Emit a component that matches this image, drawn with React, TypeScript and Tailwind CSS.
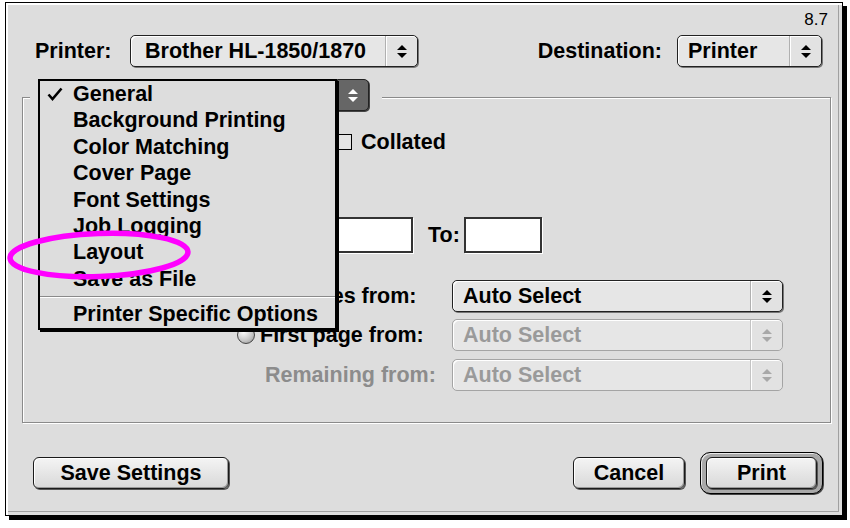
import { type ReactNode } from "react";

const MENU_ITEMS = ["General", "Background Printing", "Color Matching", "Cover Page", "Font Settings", "Job Logging", "Layout", "Save as File"];

export default function App() {
    return (
        <div className="w-[850px] h-[528px] bg-white pt-[2px] pl-[5px] font-['Liberation_Sans',Arial,sans-serif] font-bold text-[21.5px] text-black">
            <div className="relative w-[838px] h-[514px] border border-black bg-[#dddddd] shadow-[4px_4px_0_#000,inset_2px_2px_0_#fff,inset_-3px_-3px_0_#dddddd,inset_-4px_-4px_0_#a0a0a0] flex flex-col">

                <div className="h-[32px] flex justify-end pr-[14px] pt-[8px] text-[17px] leading-[17px] font-normal">
                    8.7
                </div>

                <div className="h-[32px] flex items-center pl-[29px] pr-[20px]">
                    <div className="w-[95px]">Printer:</div>
                    <Popup className="w-[288px]" pad="pl-[14px]">Brother HL-1850/1870</Popup>
                    <div className="flex-1" />
                    <div className="mr-[15px]">Destination:</div>
                    <Popup className="w-[145px]" pad="pl-[10px]">Printer</Popup>
                </div>

                <div className="relative mt-[30px] ml-[16px] w-[809px] h-[326px] border border-[#8a8a8a] shadow-[inset_1px_1px_0_#fff,1px_1px_0_#fff] flex flex-col pt-[28px]">
                    <div className="absolute left-[7px] top-[-19px] pl-[8px] pr-[13px] bg-[#dddddd]">
                        <SectionPopup />
                    </div>

                    {/* copies row: only the Collated box shows beside the open menu */}
                    <div className="h-[32px] flex items-center">
                        <div className="w-[313px]" />
                        <div className="w-[16px] h-[16px] border-[1.5px] border-black bg-[#e4e4e4]" />
                        <div className="ml-[9px]">Collated</div>
                    </div>

                    <div className="mt-[13px] h-[32px]" />

                    <div className="mt-[14px] h-[36px] flex items-center">
                        <div className="w-[314px]" />
                        <TextField className="w-[76px]" />
                        <div className="ml-[15px] mr-[4px]">To:</div>
                        <TextField className="w-[78px]" />
                    </div>

                    <div className="mt-[27px] h-[32px] flex items-center">
                        <div className="w-[214px]" />
                        <Radio checked />
                        <div className="ml-[5px] w-[192px]">All pages from:</div>
                        <Popup className="w-[331px]" pad="pl-[10px]">Auto Select</Popup>
                    </div>

                    <div className="mt-[7px] h-[32px] flex items-center">
                        <div className="w-[214px]" />
                        <Radio />
                        <div className="ml-[5px] w-[192px]">First page from:</div>
                        <Popup className="w-[331px]" pad="pl-[10px]" disabled>Auto Select</Popup>
                    </div>

                    <div className="mt-[8px] h-[32px] flex items-center">
                        <div className="w-[214px]" />
                        <div className="w-[23px]" />
                        <div className="w-[192px] pl-[5px] text-[#8c8c8c]">Remaining from:</div>
                        <Popup className="w-[331px]" pad="pl-[10px]" disabled>Auto Select</Popup>
                    </div>
                </div>

                <div className="mt-[29px] h-[42px] flex items-center pl-[27px] pr-[19px]">
                    <Button className="w-[196px]">Save Settings</Button>
                    <div className="flex-1" />
                    <Button className="w-[112px] mr-[15px]">Cancel</Button>
                    <div className="w-[123px] h-[42px] rounded-[10px] border border-black bg-[#a9a9a9] shadow-[inset_1px_1px_0_#e8e8e8,1px_1px_0_#444] px-[5px] py-[4px]">
                        <Button className="w-full">Print</Button>
                    </div>
                </div>

                <svg className="absolute left-[-6px] top-[-3px] w-[850px] h-[528px] pointer-events-none z-20" viewBox="0 0 850 528">
                    <ellipse cx="99" cy="255" rx="89" ry="21.5" fill="none" stroke="#ff00ff" strokeWidth="5.5" transform="rotate(-2 99 255)" />
                </svg>
            </div>
        </div>
    );
}

function Arrows({ color }: { color: string }) {
    return (
        <svg width="10" height="15" viewBox="0 0 10 15">
            <polygon points="0,6 5,1 10,6" fill={color} />
            <polygon points="0,9 5,14 10,9" fill={color} />
        </svg>
    );
}

function Popup({ children, className, pad, disabled }: { children: ReactNode; className: string; pad: string; disabled?: boolean }) {
    return (
        <div className={`${className} h-[32px] flex rounded-[5px] border bg-[#e6e6e6] ${disabled ? "border-[#a4a4a4] text-[#9a9a9a]" : "border-[#222] shadow-[1px_1px_0_#777]"}`}>
            <div className={`flex-1 flex items-center ${pad} rounded-l-[5px] shadow-[inset_1px_1px_0_#fff]`}>
                {children}
            </div>
            <div className={`w-[32px] flex items-center justify-center border-l rounded-r-[5px] bg-[#e2e2e2] shadow-[inset_1px_1px_0_#fff] ${disabled ? "border-[#c4c4c4]" : "border-[#b0b0b0]"}`}>
                <Arrows color={disabled ? "#a8a8a8" : "#000"} />
            </div>
        </div>
    );
}

function SectionPopup() {
    return (
        <div className="relative w-[331px] h-[32px] flex">
            <div className="flex-1 rounded-l-[5px] border border-[#222] bg-[#e6e6e6]" />
            <div className="w-[32px] flex items-center justify-center rounded-r-[5px] bg-[#666] border border-[#222] shadow-[1px_1px_0_#444]">
                <Arrows color="#fff" />
            </div>

            <div className="absolute left-0 top-0 z-10 w-[299px] border-2 border-black bg-[#dddddd] shadow-[2px_2px_0_#000]">
                {MENU_ITEMS.map((item, i) => (
                    <MenuRow key={item} checked={i === 0}>{item}</MenuRow>
                ))}
                <div className="h-[9px] flex flex-col justify-center">
                    <div className="h-[1px] bg-[#8a8a8a]" />
                    <div className="h-[1px] bg-white" />
                </div>
                <MenuRow>Printer Specific Options</MenuRow>
            </div>
        </div>
    );
}

function MenuRow({ children, checked }: { children: ReactNode; checked?: boolean }) {
    return (
        <div className="h-[26.4px] flex items-center whitespace-nowrap">
            <div className="w-[33px] pl-[7px] flex items-center">
                {checked && (
                    <svg width="16" height="14" viewBox="0 0 16 14">
                        <path d="M1.5 7.5 L5.5 12 L14.5 1.5" fill="none" stroke="#000" strokeWidth="2.6" />
                    </svg>
                )}
            </div>
            {children}
        </div>
    );
}

function Radio({ checked }: { checked?: boolean }) {
    return (
        <div className="w-[18px] h-[18px] rounded-full border border-[#444] bg-[radial-gradient(circle_at_35%_30%,#ffffff,#c4c4c4_60%,#8a8a8a)] flex items-center justify-center">
            {checked && <div className="w-[7px] h-[7px] rounded-full bg-black" />}
        </div>
    );
}

function TextField({ className }: { className: string }) {
    return <div className={`${className} h-[36px] border-2 border-[#333] bg-white shadow-[1px_1px_0_#fff]`} />;
}

function Button({ children, className }: { children: ReactNode; className: string }) {
    return (
        <div className={`${className} h-[32px] flex items-center justify-center rounded-[6px] border border-[#1a1a1a] bg-[linear-gradient(#f4f4f4,#d8d8d8)] shadow-[inset_1px_1px_0_#fff,inset_-1px_-1px_0_#999,1px_1px_0_#555]`}>
            {children}
        </div>
    );
}
